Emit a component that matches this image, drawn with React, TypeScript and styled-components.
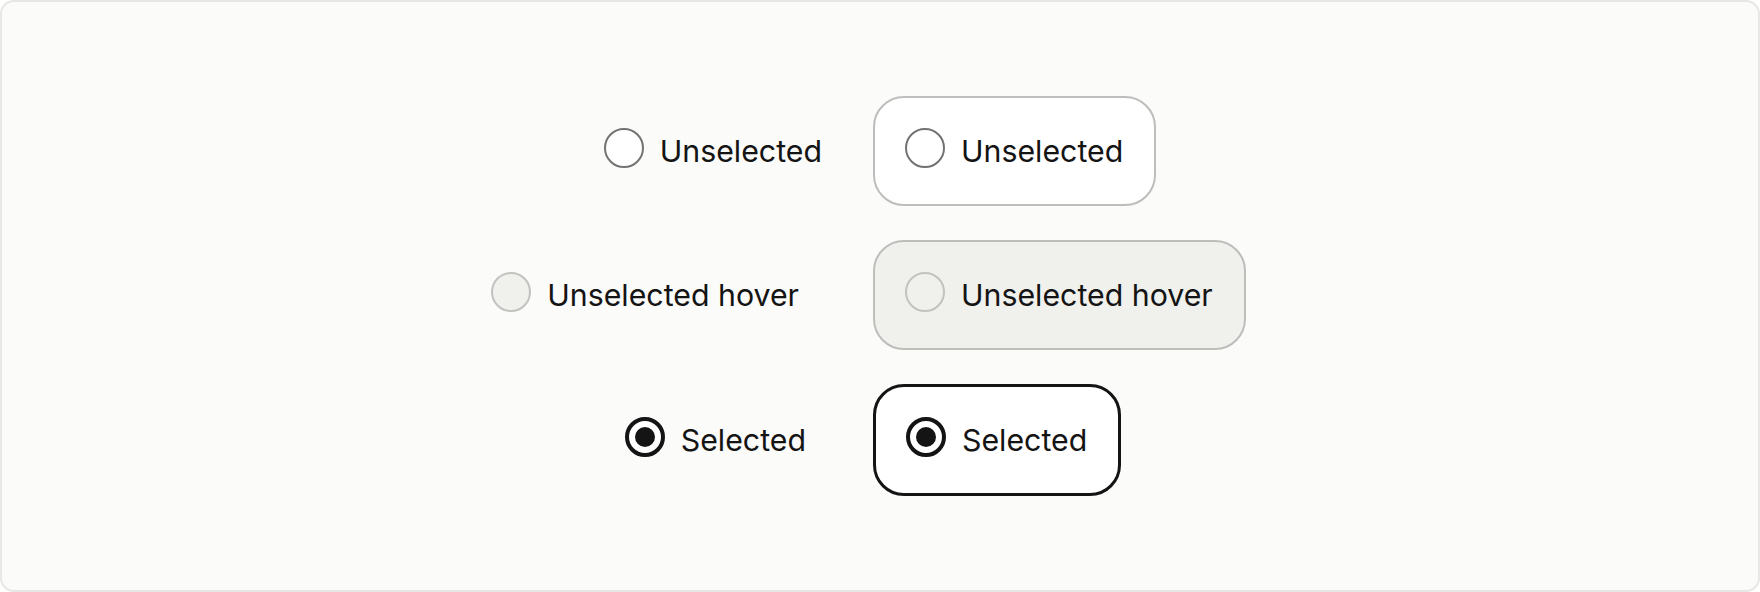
import React from "react";
import styled, { createGlobalStyle, css } from "styled-components";

type State = "unselected" | "hover" | "selected";

const GlobalStyle = createGlobalStyle`
  html, body {
    margin: 0;
    padding: 0;
    background: #ffffff;
  }
  body {
    font-family: Inter, "Noto Sans", sans-serif;
    color: #141414;
  }
`;

const Frame = styled.div`
  box-sizing: border-box;
  width: 1760px;
  height: 592px;
  border: 2px solid #e7e7e4;
  border-radius: 14px;
  background: #fbfbf9;
  display: flex;
  flex-direction: column;
  justify-content: center;
  gap: 34px;
`;

const Row = styled.div`
  display: grid;
  grid-template-columns: 820px auto;
  column-gap: 51px;
  align-items: center;
`;

const Plain = styled.label<{ $trail: number }>`
  justify-self: end;
  margin-right: ${(p) => p.$trail}px;
  display: flex;
  align-items: flex-start;
  gap: 16px;
  padding: 32px 0;
  cursor: pointer;
`;

const Card = styled.label<{ $state: State }>`
  justify-self: start;
  display: flex;
  align-items: flex-start;
  gap: 16px;
  padding: 30px 31px 30px 30px;
  border-radius: 31px;
  cursor: pointer;
  background: #ffffff;
  border: 2px solid #bdbdbb;
  ${(p) =>
    p.$state === "hover" &&
    css`
      background: #f0f0ed;
      border-color: #bdbdbb;
    `}
  ${(p) =>
    p.$state === "selected" &&
    css`
      border: 3px solid #141414;
    `}
`;

const Dot = styled.span<{ $state: State }>`
  box-sizing: border-box;
  flex: none;
  width: 40px;
  height: 40px;
  border-radius: 50%;
  display: flex;
  align-items: center;
  justify-content: center;
  background: #ffffff;
  border: 2px solid #737373;
  ${(p) =>
    p.$state === "hover" &&
    css`
      background: #f0f0ed;
      border-color: #c2c2c0;
    `}
  ${(p) =>
    p.$state === "selected" &&
    css`
      border: 4.5px solid #141414;
      &::after {
        content: "";
        width: 20px;
        height: 20px;
        border-radius: 50%;
        background: #141414;
      }
    `}
`;

const Label = styled.span`
  font-size: 30.3px;
  line-height: 46px;
  font-weight: 400;
  white-space: nowrap;
`;

const rows: { state: State; text: string; trail: number }[] = [
  { state: "unselected", text: "Unselected", trail: 0 },
  { state: "hover", text: "Unselected hover", trail: 23 },
  { state: "selected", text: "Selected", trail: 16 },
];

export default function App(): JSX.Element {
  return (
    <>
      <GlobalStyle />
      <Frame>
        {rows.map((r) => (
          <Row key={r.text}>
            <Plain $trail={r.trail}>
              <Dot $state={r.state} />
              <Label>{r.text}</Label>
            </Plain>
            <Card $state={r.state}>
              <Dot $state={r.state} />
              <Label>{r.text}</Label>
            </Card>
          </Row>
        ))}
      </Frame>
    </>
  );
}
